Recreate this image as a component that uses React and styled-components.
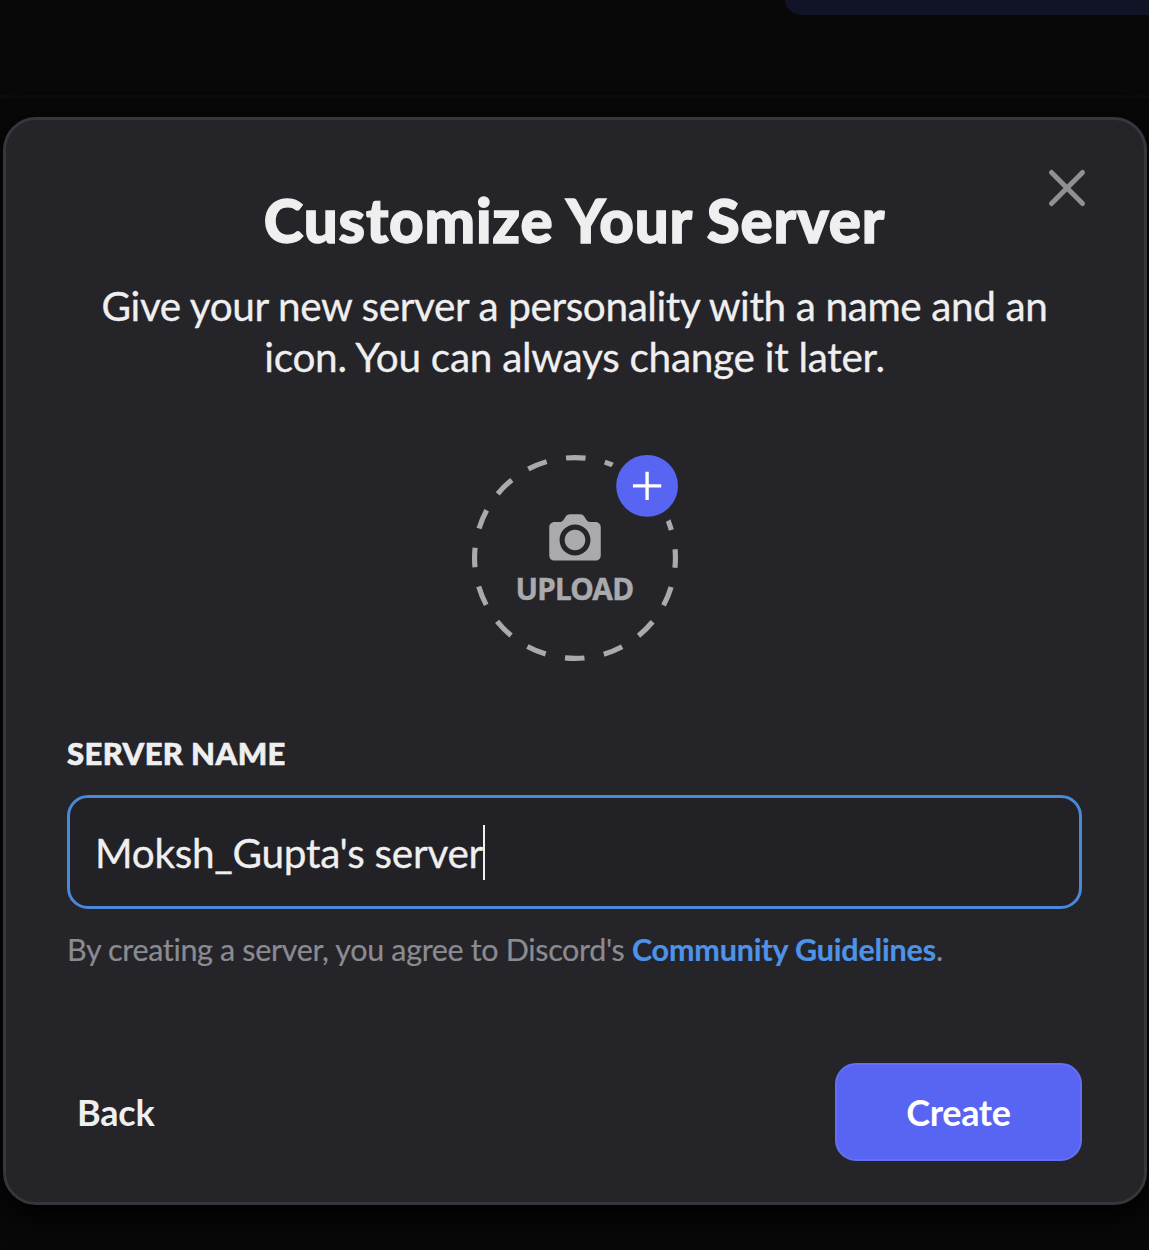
import React from "react";
import styled, { createGlobalStyle } from "styled-components";

const GlobalStyle = createGlobalStyle`
  * { box-sizing: border-box; }
  body { margin: 0; background: #080808; overflow: hidden; }
  button { font: inherit; border: 0; background: none; padding: 0; color: inherit; }
`;

const Page = styled.div`
  height: 1250px;
  overflow: hidden;
  background: #080808;
  font-family: Lato, "Open Sans", sans-serif;
  font-variant-ligatures: none;
  color: #efeff0;
  white-space: nowrap;
`;

const Backdrop = styled.div`
  display: flex;
  justify-content: flex-end;
  height: 98px;
  border-bottom: 3px solid #0c0c0d;
`;

const Banner = styled.div`
  width: 364px;
  height: 15px;
  background: #111327;
  border-bottom-left-radius: 20px 18px;
`;

const Modal = styled.section`
  position: relative;
  display: flex;
  flex-direction: column;
  width: 1144px;
  height: 1088px;
  margin: 19px 0 0 3px;
  padding: 67.5px 62px 41px 61px;
  border: 3px solid #36363b;
  border-radius: 33px;
  background: #252429;
  box-shadow: 0 10px 30px #000;
`;

const Close = styled.button`
  position: absolute;
  top: 48px;
  right: 57.5px;
  width: 40px;
  height: 40px;
  svg { display: block; }
`;

const Title = styled.h1`
  margin: -1px 0 0;
  font-size: 60px;
  line-height: 66px;
  font-weight: 900;
  text-align: center;
  -webkit-text-stroke: 1.4px currentColor;
  letter-spacing: ${(p) => p.$track}px;
`;

const Subtitle = styled.p`
  margin: 27px 0 0;
  font-size: 40.5px;
  line-height: 51.6px;
  text-align: center;
  -webkit-text-stroke: 0.3px currentColor;
`;

const Line = styled.span`
  display: block;
  letter-spacing: ${(p) => p.$track}px;
`;

const Upload = styled.div`
  align-self: center;
  width: 206px;
  height: 206px;
  margin: 72.5px 0 0;
  svg { display: block; overflow: visible; }
`;

const Label = styled.label`
  margin-top: 71.5px;
  font-size: 31px;
  line-height: 40px;
  font-weight: 900;
  -webkit-text-stroke: 0.6px currentColor;
  letter-spacing: ${(p) => p.$track}px;
`;

const Field = styled.div`
  display: flex;
  align-items: center;
  height: 114px;
  margin-top: 22px;
  padding: 1px 0 0 25px;
  border: 3px solid #4889da;
  border-radius: 21px;
  background: #222126;
  font-size: 40.5px;
  -webkit-text-stroke: 0.3px currentColor;
  letter-spacing: ${(p) => p.$track}px;
`;

const Caret = styled.span`
  width: 2px;
  height: 55px;
  background: #efeff0;
`;

const Hint = styled.p`
  margin: 20px 0 0;
  font-size: 30.5px;
  line-height: 40px;
  color: #8b8b92;
  -webkit-text-stroke: 0.2px currentColor;
  letter-spacing: ${(p) => p.$track}px;
`;

const Link = styled.a`
  font-weight: 700;
  color: #4d93e8;
  letter-spacing: ${(p) => p.$track}px;
`;

const Footer = styled.footer`
  display: flex;
  align-items: center;
  justify-content: space-between;
  margin-top: auto;
  font-size: 36px;
  font-weight: 700;
`;

const Back = styled.button`
  padding-left: 10px;
  letter-spacing: ${(p) => p.$track}px;
`;

const Create = styled.button`
  width: 247px;
  height: 98px;
  border: 2px solid #6370f3;
  border-radius: 21px;
  background: #5865f2;
  color: #fff;
  letter-spacing: ${(p) => p.$track}px;
`;

const DASH = 7.68;
const RING_RADIUS = 39;
const STEP = (2 * Math.PI * RING_RADIUS) / 16;

function UploadIcon() {
  return (
    <svg width="206" height="206" viewBox="0 0 80 80" fill="#a9aaae">
      <mask id="badgeGap">
        <rect width="80" height="80" fill="#fff" />
        <circle cx="68" cy="12" r="15.8" fill="#000" />
      </mask>
      <circle
        cx="40" cy="40" r={RING_RADIUS} fill="none" stroke="#a9aaae" strokeWidth="2"
        strokeDasharray={`${DASH} ${STEP - DASH}`} strokeDashoffset={DASH / 2} mask="url(#badgeGap)"
      />
      <path d="M40 29C37.794 29 36 30.794 36 33C36 35.207 37.794 37 40 37C42.206 37 44 35.207 44 33C44 30.795 42.206 29 40 29Z" />
      <path fillRule="evenodd" d="M48 26.001H46.07C45.402 26.001 44.777 25.667 44.406 25.111L43.594 23.891C43.223 23.335 42.598 23 41.93 23H38.07C37.402 23 36.777 23.335 36.406 23.89L35.594 25.11C35.223 25.667 34.598 26 33.93 26H32C30.895 26 30 26.896 30 28V39C30 40.104 30.895 41 32 41H48C49.104 41 50 40.104 50 39V28C50 26.897 49.104 26.001 48 26.001ZM40 39C36.691 39 34 36.309 34 33C34 29.692 36.691 27 40 27C43.309 27 46 29.692 46 33C46 36.31 43.309 39 40 39Z" />
      <text x="39.75" y="56.25" fontSize="11.6" fontWeight="700" letterSpacing="-0.33" stroke="#a9aaae" strokeWidth="0.15" textAnchor="middle" fontFamily="Noto Sans, sans-serif">UPLOAD</text>
      <circle cx="68" cy="12" r="12" fill="#5865f2" />
      <path d="M68 6.5V17.5M62.5 12H73.5" stroke="#fff" strokeWidth="1.3" />
    </svg>
  );
}

export default function App() {
  return (
    <Page>
      <GlobalStyle />
      <Backdrop><Banner /></Backdrop>
      <Modal>
        <Close aria-label="Close">
          <svg width="40" height="40" viewBox="0 0 40 40" stroke="#909094" strokeWidth="5" strokeLinecap="round">
            <path d="M4.5 4.5L35.5 35.5M35.5 4.5L4.5 35.5" />
          </svg>
        </Close>
        <Title $track={0.8}>Customize Your Server</Title>
        <Subtitle>
          <Line $track={-0.39}>Give your new server a personality with a name and an</Line>
          <Line $track={-0.28}>icon. You can always change it later.</Line>
        </Subtitle>
        <Upload><UploadIcon /></Upload>
        <Label $track={0.4}>SERVER NAME</Label>
        <Field $track={-0.28}>Moksh_Gupta's server<Caret /></Field>
        <Hint $track={-0.34}>
          By creating a server, you agree to Discord's <Link $track={-0.17}>Community Guidelines</Link>.
        </Hint>
        <Footer>
          <Back $track={-0.2}>Back</Back>
          <Create $track={-0.35}>Create</Create>
        </Footer>
      </Modal>
    </Page>
  );
}
